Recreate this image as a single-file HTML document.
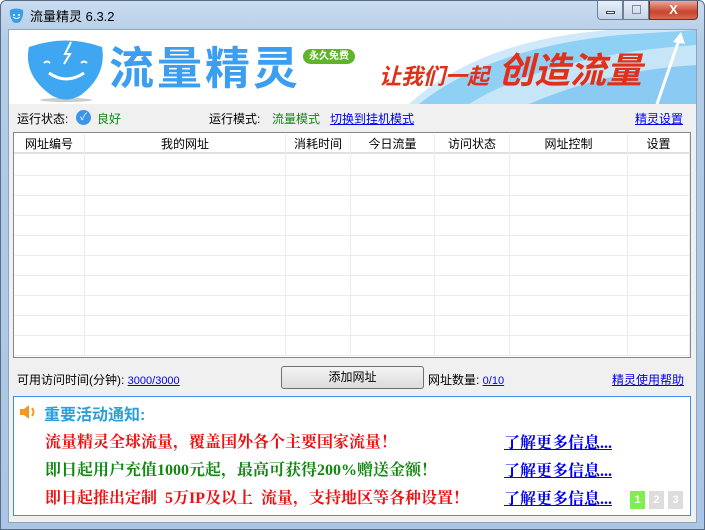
<!DOCTYPE html>
<html><head><meta charset="utf-8"><style>
*{margin:0;padding:0;box-sizing:border-box}
body{width:705px;height:530px;overflow:hidden;font-family:"Liberation Sans","Noto Sans CJK SC",sans-serif;font-size:12px;background:#fff}
.a{position:absolute}
#win{position:absolute;left:0;top:0;width:705px;height:530px;background:linear-gradient(#c9dcf0,#b3cce6 40px,#aac6e4);border:1px solid #5a6d84;border-radius:6px 6px 0 0}
#client{position:absolute;left:8px;top:29px;width:689px;height:494px;background:#f0f0f0;border:1px solid #8ea4bd}
.u{color:#0000ee;text-decoration:underline}
.col{position:absolute;top:134px;height:222px;width:1px;background:#ececec}
.row{position:absolute;left:14px;width:676px;height:1px;background:#ececec}
.hd{position:absolute;top:134px;height:20px;line-height:20px;text-align:center;font-size:12px;color:#000}
.n{position:absolute;font-family:"Liberation Serif","Noto Serif CJK SC",serif;font-weight:bold;font-size:16px}
</style></head><body>
<div id="win">
 <svg class="a" style="left:7px;top:6px" width="17" height="17" viewBox="0 0 17 17"><path d="M2 3Q8 0 15 3Q16 9 12 15Q8 17 5 15Q1 9 2 3Z" fill="#3a9de8"/><circle cx="6" cy="8" r="1" fill="#fff"/><circle cx="11" cy="8" r="1" fill="#fff"/><path d="M5 10Q8.5 13 12 10" stroke="#fff" fill="none"/></svg>
 <div class="a" style="left:29px;top:5px;font-size:13px;color:#000">流量精灵 6.3.2</div>
 <div class="a" style="left:596px;top:0;width:26px;height:19px;border:1px solid #6d7f96;border-top:none;border-radius:0 0 0 4px;background:linear-gradient(#e8f0f9,#c3d4e8)"><div class="a" style="left:8px;top:10px;width:9px;height:3px;background:#fff;border:1px solid #445"></div></div>
 <div class="a" style="left:622px;top:0;width:26px;height:19px;border:1px solid #6d7f96;border-top:none;background:linear-gradient(#e8f0f9,#c3d4e8)"><div class="a" style="left:8px;top:4px;width:9px;height:9px;border:1px solid #889"></div></div>
 <div class="a" style="left:648px;top:0;width:49px;height:19px;border:1px solid #6d3028;border-top:none;border-radius:0 0 4px 0;background:linear-gradient(#e9a99c,#c7452f 60%,#d8684f);color:#fff;font-weight:bold;font-size:13px;text-align:center;line-height:17px">X</div>
</div>
<div id="client"></div>
<div class="a" style="left:9px;top:30px;width:687px;height:74px;background:#fff;overflow:hidden">
 <svg class="a" style="left:0;top:0" width="687" height="74"><path d="M400 74Q470 10 600 0H687V74Z" fill="#cfe9fa"/><path d="M410 74Q480 18 610 5L687 0V74Z" fill="#8fd0f5"/><path d="M460 74Q540 25 687 15V74Z" fill="#c6e6f8"/><path d="M520 74Q600 40 687 35V74Z" fill="#8bcbf3"/><path d="M648 74L670 10" stroke="#fff" stroke-width="3"/><path d="M664 12L672 2L676 14Z" fill="#fff"/><ellipse cx="57" cy="70" rx="26" ry="2" fill="#ccc"/>
 <path d="M20 17Q57 4 93 17Q98 45 72 65Q57 74 42 65Q14 45 20 17Z" fill="#3fa6f2"/><path d="M62 12L56 24L61 24L55 34" stroke="#fff" stroke-width="2" fill="none"/><path d="M35 33q3-3 6 0M72 33q3-3 6 0" stroke="#fff" stroke-width="2" fill="none"/><path d="M40 43Q57 55 75 43" stroke="#fff" stroke-width="3" fill="none"/></svg>
 <div class="a" style="left:100px;top:14px;font-size:45px;line-height:50px;color:#3c9ef0;font-weight:bold;letter-spacing:3px">流量精灵</div>
 <div class="a" style="left:294px;top:19px;width:52px;height:15px;background:#5fb52a;border-radius:8px;color:#fff;font-size:10px;line-height:15px;text-align:center;font-weight:bold">永久免费</div>
 <div class="a" style="left:370px;top:34px;font-size:22px;line-height:26px;color:#e0301a;font-weight:bold;font-style:italic">让我们一起</div>
 <div class="a" style="left:489px;top:21px;font-size:36px;line-height:40px;color:#e0301a;font-weight:bold;font-style:italic">创造流量</div>
</div>
<div class="a" style="left:17px;top:110px">运行状态:</div>
<div class="a" style="left:76px;top:110px;width:15px;height:15px;border-radius:50%;background:#3d95e8;color:#fff;font-size:10px;text-align:center;line-height:15px">✓</div>
<div class="a" style="left:97px;top:110px;color:#118811">良好</div>
<div class="a" style="left:209px;top:110px">运行模式:</div>
<div class="a" style="left:272px;top:110px;color:#118811">流量模式</div>
<div class="a u" style="left:330px;top:110px">切换到挂机模式</div>
<div class="a u" style="left:635px;top:110px">精灵设置</div>
<div class="a" style="left:13px;top:132px;width:678px;height:226px;background:#fff;border:1px solid #828790"></div>
<div class="a" style="left:14px;top:133px;width:676px;height:21px;background:#fff;border-bottom:2px solid #e0e0e0"></div>
<div class="col" style="left:84px"></div><div class="col" style="left:285px"></div><div class="col" style="left:350px"></div><div class="col" style="left:434px"></div><div class="col" style="left:509px"></div><div class="col" style="left:627px"></div><div class="col" style="left:689px"></div>
<div class="hd" style="left:14px;width:70px">网址编号</div><div class="hd" style="left:85px;width:200px">我的网址</div><div class="hd" style="left:286px;width:64px">消耗时间</div><div class="hd" style="left:351px;width:83px">今日流量</div><div class="hd" style="left:435px;width:74px">访问状态</div><div class="hd" style="left:510px;width:117px">网址控制</div><div class="hd" style="left:628px;width:61px">设置</div>
<div class="row" style="top:175px"></div><div class="row" style="top:195px"></div><div class="row" style="top:215px"></div><div class="row" style="top:235px"></div><div class="row" style="top:255px"></div><div class="row" style="top:275px"></div><div class="row" style="top:295px"></div><div class="row" style="top:315px"></div><div class="row" style="top:335px"></div><div class="row" style="top:355px"></div>
<div class="a" style="left:17px;top:371px">可用访问时间(分钟): <span class="u" style="font-size:11px">3000/3000</span></div>
<div class="a" style="left:281px;top:366px;width:143px;height:23px;border:1px solid #707070;border-radius:3px;background:linear-gradient(#f4f4f4,#dcdcdc);text-align:center;line-height:21px">添加网址</div>
<div class="a" style="left:428px;top:371px">网址数量: <span class="u" style="font-size:11px">0/10</span></div>
<div class="a u" style="left:612px;top:371px">精灵使用帮助</div>
<div class="a" style="left:13px;top:396px;width:678px;height:120px;background:#fff;border:1px solid #3c8fe8"></div>
<svg class="a" style="left:18px;top:403px" width="20" height="18"><path d="M2 6H6L11 2V16L6 12H2Z" fill="#f29a1f"/><path d="M14 5Q17 9 14 13" stroke="#f29a1f" stroke-width="2" fill="none"/></svg>
<div class="a" style="left:44px;top:401px;font-size:16px;color:#2aa0d6;font-weight:bold">重要活动通知:</div>
<div class="n" style="left:45px;top:429px;color:#ee1111">流量精灵全球流量，覆盖国外各个主要国家流量！</div>
<div class="n" style="left:45px;top:457px;color:#118811">即日起用户充值1000元起，最高可获得200%赠送金额！</div>
<div class="n" style="left:45px;top:485px;color:#ee1111">即日起推出定制 &nbsp;5万IP及以上 &nbsp;流量，支持地区等各种设置！</div>
<div class="n u" style="left:504px;top:430px">了解更多信息...</div>
<div class="n u" style="left:504px;top:458px">了解更多信息...</div>
<div class="n u" style="left:504px;top:486px">了解更多信息...</div>
<div class="a" style="left:630px;top:491px;width:15px;height:18px;background:#80ee50;color:#fff;font-weight:bold;text-align:center;line-height:18px;font-size:11px">1</div>
<div class="a" style="left:649px;top:491px;width:15px;height:18px;background:#ddd;color:#fff;font-weight:bold;text-align:center;line-height:18px;font-size:11px">2</div>
<div class="a" style="left:668px;top:491px;width:15px;height:18px;background:#ddd;color:#fff;font-weight:bold;text-align:center;line-height:18px;font-size:11px">3</div>
</body></html>
